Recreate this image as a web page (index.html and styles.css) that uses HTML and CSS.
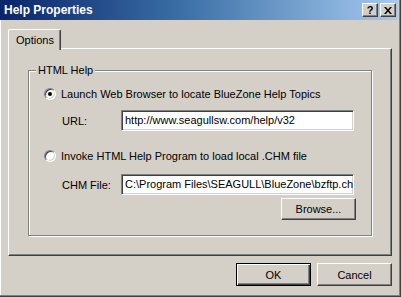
FILE: index.html
```html
<!DOCTYPE html>
<html>
<head>
<meta charset="utf-8">
<link rel="stylesheet" href="styles.css">
</head>
<body>
<div class="window">
  <div class="titlebar">
    <span class="title">Help Properties</span>
    <div class="caption-buttons">
      <div class="cap-btn help">?</div>
      <div class="cap-btn close">
        <svg width="8" height="7" viewBox="0 0 8 7"><path d="M0 0h2l2 2.5 2-2.5h2l-3 3.5 3 3.5h-2l-2-2.5-2 2.5h-2l3-3.5z" fill="#000"/></svg>
      </div>
    </div>
  </div>
  <div class="client">
    <div class="tabs">
      <div class="tab">Options</div>
    </div>
    <div class="panel">
      <div class="group">
        <span class="legend">HTML Help</span>
        <div class="radio-row r1">
          <span class="radio checked"></span>
          <span>Launch Web Browser to locate BlueZone Help Topics</span>
        </div>
        <div class="field-row f1">
          <span class="field-label">URL:</span>
          <div class="edit">http://www.seagullsw.com/help/v32</div>
        </div>
        <div class="radio-row r2">
          <span class="radio"></span>
          <span>Invoke HTML Help Program to load local .CHM file</span>
        </div>
        <div class="field-row f2">
          <span class="field-label">CHM File:</span>
          <div class="edit">C:\Program Files\SEAGULL\BlueZone\bzftp.chm</div>
        </div>
        <div class="browse-row">
          <div class="btn browse">Browse...</div>
        </div>
      </div>
    </div>
    <div class="actions">
      <div class="btn default">OK</div>
      <div class="btn">Cancel</div>
    </div>
  </div>
</div>
</body>
</html>
```

FILE: styles.css
```css
* { box-sizing: border-box; }
html, body {
  margin: 0;
  padding: 0;
  background: #d4d0c8;
}
body {
  font-family: "Liberation Sans", Arial, sans-serif;
  font-size: 11px;
  color: #000;
}
.window {
  width: 401px;
  height: 297px;
  background: #d4d0c8;
  border-right: 1px solid #404040;
  border-bottom: 1px solid #404040;
  box-shadow: inset -1px -1px #808080, inset 1px 0 #ffffff;
  display: flex;
  flex-direction: column;
}
.titlebar {
  height: 20px;
  margin-right: 2px;
  background: linear-gradient(to right, #0a246a 0%, #3a6ea5 45%, #a6caf0 100%);
  display: flex;
  align-items: center;
  justify-content: space-between;
  padding: 0 2px 0 4px;
}
.title {
  color: #fff;
  font-weight: bold;
  font-size: 12px;
}
.caption-buttons {
  display: flex;
  gap: 2px;
}
.cap-btn {
  width: 16px;
  height: 14px;
  background: #d4d0c8;
  border: 1px solid;
  border-color: #ffffff #404040 #404040 #ffffff;
  box-shadow: inset -1px -1px #808080;
  display: flex;
  align-items: center;
  justify-content: center;
  font-weight: bold;
  font-size: 11px;
  line-height: 1;
}
.client {
  flex: 1;
  padding: 9px 8px 0 8px;
  display: flex;
  flex-direction: column;
}
.tabs {
  display: flex;
  height: 20px;
  position: relative;
  z-index: 1;
  margin-bottom: -1px;
}
.tab {
  width: 53px;
  height: 21px;
  background: #d4d0c8;
  border-top: 1px solid #fff;
  border-left: 1px solid #fff;
  border-right: 1px solid #404040;
  border-top-left-radius: 2px;
  border-top-right-radius: 2px;
  box-shadow: inset -1px 0 #808080;
  padding: 4px 0 0 7px;
}
.panel {
  width: 384px;
  height: 208px;
  border: 1px solid;
  border-color: #ffffff #404040 #404040 #ffffff;
  box-shadow: inset -1px -1px #808080;
  padding: 21px 0 0 19px;
}
.group {
  position: relative;
  width: 344px;
  height: 166px;
  border: 1px solid #808080;
  box-shadow: inset 1px 1px #fff, 1px 1px #fff;
  display: flex;
  flex-direction: column;
}
.legend {
  position: absolute;
  left: 7px;
  top: -8px;
  padding: 0 2px;
  background: #d4d0c8;
  line-height: 14px;
}
.radio-row {
  display: flex;
  align-items: center;
  gap: 5px;
  margin-left: 15px;
  height: 12px;
}
.r1 { margin-top: 17px; }
.r2 { margin-top: 19px; }
.radio {
  width: 12px;
  height: 12px;
  border-radius: 50%;
  border: 1px solid;
  border-color: #808080 #ffffff #ffffff #808080;
  box-shadow: inset 1px 1px #404040, inset -1px -1px #d4d0c8;
  background: #fff;
  display: flex;
  align-items: center;
  justify-content: center;
  flex: none;
}
.radio.checked::after {
  content: "";
  width: 4px;
  height: 4px;
  border-radius: 50%;
  background: #000;
}
.field-row {
  display: flex;
  align-items: center;
  padding-left: 33px;
  height: 21px;
}
.f1 { margin-top: 10px; }
.f2 { margin-top: 12px; }
.field-label {
  width: 59px;
}
.edit {
  width: 233px;
  height: 21px;
  background: #fff;
  border: 1px solid;
  border-color: #808080 #ffffff #ffffff #808080;
  box-shadow: inset 1px 1px #404040, inset -1px -1px #d4d0c8;
  padding: 3px 0 0 3px;
  white-space: nowrap;
  overflow: hidden;
}
.browse-row {
  display: flex;
  justify-content: flex-end;
  padding-right: 15px;
  margin-top: 3px;
}
.btn {
  width: 75px;
  height: 23px;
  background: #d4d0c8;
  border: 1px solid;
  border-color: #ffffff #404040 #404040 #ffffff;
  box-shadow: inset -1px -1px #808080;
  display: flex;
  align-items: center;
  justify-content: center;
}
.browse { height: 22px; }
.btn.default {
  border: 1px solid #000;
  box-shadow: inset 1px 1px #fff, inset -1px -1px #404040, inset -2px -2px #808080;
}
.actions {
  display: flex;
  justify-content: flex-end;
  gap: 6px;
  margin-top: 7px;
}
```
